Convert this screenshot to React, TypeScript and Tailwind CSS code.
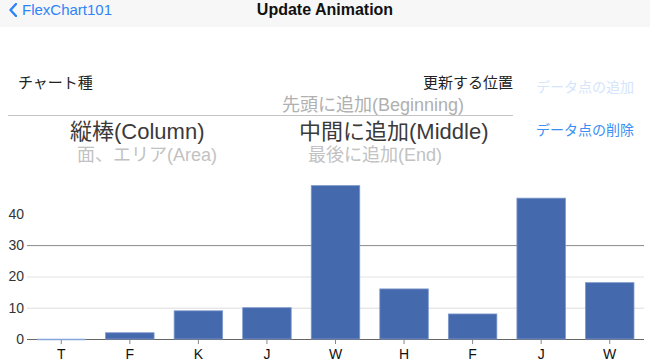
import React from "react";

const data = [
  { name: "T", v: 0 },
  { name: "F", v: 2 },
  { name: "K", v: 9 },
  { name: "J", v: 10 },
  { name: "W", v: 49 },
  { name: "H", v: 16 },
  { name: "F", v: 8 },
  { name: "J", v: 45 },
  { name: "W", v: 18 },
];

function Chart() {
  const x0 = 27;
  const x1 = 644;
  const base = 169;
  const k = 3.13;
  const cw = (x1 - x0) / data.length;
  const bw = 48.5;
  const y = (v: number) => base - v * k;
  return (
    <svg width={650} height={191} className="block" style={{ fontFamily: '"Liberation Sans", Arial, sans-serif' }}>
      <line x1={x0} x2={x1} y1={y(10) + 0.5} y2={y(10) + 0.5} stroke="#dcdcdc" strokeWidth={1} />
      <line x1={x0} x2={x1} y1={y(20) + 0.5} y2={y(20) + 0.5} stroke="#ececec" strokeWidth={1.5} />
      <line x1={x0} x2={x1} y1={y(30) + 0.5} y2={y(30) + 0.5} stroke="#8a8a8a" strokeWidth={1} />
      {[0, 10, 20, 30, 40].map((t) => (
        <text key={t} x={24} y={y(t) + 5} textAnchor="end" fontSize={14} fill="#333">
          {t}
        </text>
      ))}
      <line x1={x0} x2={x1} y1={base + 0.5} y2={base + 0.5} stroke="#666" strokeWidth={1} />
      {data.map((d, i) => {
        const cx = x0 + cw * (i + 0.5);
        return (
          <g key={i}>
            {d.v > 0 ? (
              <rect x={cx - bw / 2} y={y(d.v)} width={bw} height={base - y(d.v)} fill="#4569ad" stroke="#7d97cc" strokeWidth={0.8} />
            ) : (
              <line x1={cx - bw / 2} x2={cx + bw / 2} y1={base + 0.5} y2={base + 0.5} stroke="#86a4dc" strokeWidth={1.5} />
            )}
            <line x1={cx} x2={cx} y1={base + 1} y2={base + 5} stroke="#888" strokeWidth={1} />
            <text x={cx} y={189} textAnchor="middle" fontSize={14} fill="#111">
              {d.name}
            </text>
          </g>
        );
      })}
    </svg>
  );
}

export default function App() {
  return (
    <div
      className="w-[650px] h-[361px] bg-white overflow-hidden flex flex-col"
      style={{ fontFamily: '"Liberation Sans", "Noto Sans CJK JP", Arial, sans-serif' }}
    >
      {/* nav bar */}
      <div className="h-[27px] shrink-0 bg-[#f7f7f7] grid grid-cols-[1fr_auto_1fr] items-start">
        <div className="flex items-center h-[20px] pl-[9px] gap-[5px] text-[#2f84f5]">
          <svg width="8" height="14" viewBox="0 0 8 14">
            <path d="M7 1 L1.5 7 L7 13" fill="none" stroke="#2f84f5" strokeWidth="2.4" strokeLinecap="round" strokeLinejoin="round" />
          </svg>
          <span className="text-[15px] leading-[20px]">FlexChart101</span>
        </div>
        <div className="text-[16px] leading-[20px] font-semibold text-[#111]">Update Animation</div>
        <div />
      </div>

      {/* controls */}
      <div className="h-[143px] shrink-0 flex">
        <div className="w-[513px] flex flex-col pt-[46px]">
          <div className="h-[20px] flex items-center justify-between pl-[18px] text-[15px] leading-[20px] text-[#222]">
            <span>チャート種</span>
            <span>更新する位置</span>
          </div>
          <div className="flex pl-[8px] mt-[2px]">
            {/* picker 1 */}
            <div className="w-[252px] flex flex-col">
              <div className="h-[20px]" />
              <div className="h-px bg-[#c4c4c4]" />
              <div className="h-[26px] mt-[3px] text-[22px] leading-[26px] text-[#3a3a3a] pl-[62px] whitespace-nowrap">縦棒(Column)</div>
              <div className="h-[20px] text-[18px] leading-[20px] text-[#c2c2c2] pl-[69px] whitespace-nowrap">面、エリア(Area)</div>
            </div>
            {/* picker 2 */}
            <div className="w-[253px] flex flex-col">
              <div className="h-[20px] text-[18px] leading-[20px] text-[#b0b0b0] pl-[22px] whitespace-nowrap">先頭に追加(Beginning)</div>
              <div className="h-px bg-[#c4c4c4]" />
              <div className="h-[26px] mt-[3px] text-[22px] leading-[26px] text-[#3a3a3a] pl-[39px] whitespace-nowrap">中間に追加(Middle)</div>
              <div className="h-[20px] text-[18px] leading-[20px] text-[#c2c2c2] pl-[48px] whitespace-nowrap">最後に追加(End)</div>
            </div>
          </div>
        </div>
        <div className="flex-1 flex flex-col pl-[23px] pt-[50px] gap-[23px] text-[14px] leading-[20px]">
          <span className="text-[#d5e5fc]">データ点の追加</span>
          <span className="text-[#3b8ef3]">データ点の削除</span>
        </div>
      </div>

      {/* chart */}
      <Chart />
    </div>
  );
}
